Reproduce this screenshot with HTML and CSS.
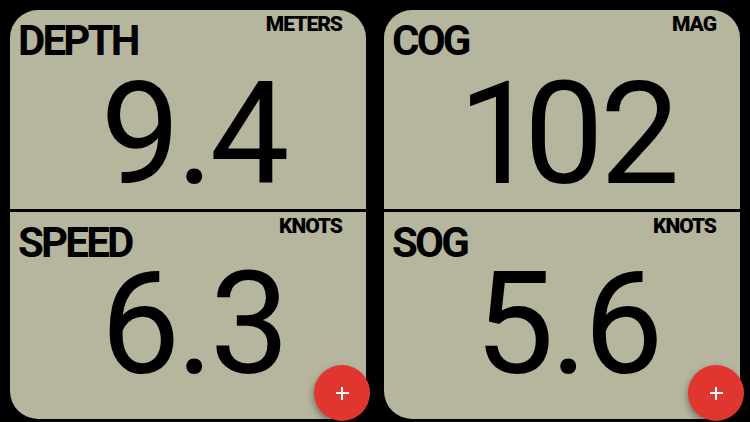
FILE: index.html
```html
<!DOCTYPE html>
<html lang="en">
<head>
<meta charset="utf-8">
<title>Instruments</title>
<link rel="stylesheet" href="styles.css">
</head>
<body>
<div class="screen">
  <div class="panel">
    <div class="section section-top">
      <div class="header">
        <span class="label">DEPTH</span>
        <span class="unit">METERS</span>
      </div>
      <div class="value">9.4</div>
    </div>
    <div class="divider"></div>
    <div class="section section-bottom">
      <div class="header">
        <span class="label">SPEED</span>
        <span class="unit">KNOTS</span>
      </div>
      <div class="value">6.3</div>
    </div>
    <button class="fab" aria-label="Add"><span class="plus"></span></button>
  </div>
  <div class="panel">
    <div class="section section-top">
      <div class="header">
        <span class="label">COG</span>
        <span class="unit">MAG</span>
      </div>
      <div class="value"><span class="one">1</span>02</div>
    </div>
    <div class="divider"></div>
    <div class="section section-bottom">
      <div class="header">
        <span class="label">SOG</span>
        <span class="unit">KNOTS</span>
      </div>
      <div class="value">5.6</div>
    </div>
    <button class="fab" aria-label="Add"><span class="plus"></span></button>
  </div>
</div>
</body>
</html>
```
FILE: styles.css
```css
html, body {
  margin: 0;
  padding: 0;
  background: #000;
}
body {
  width: 750px;
  height: 422px;
  overflow: hidden;
  font-family: Roboto, "Liberation Sans", sans-serif;
  color: #000;
}
.screen {
  display: flex;
  gap: 18px;
  padding: 10px 10px 3px 10px;
  height: 422px;
  box-sizing: border-box;
}
.panel {
  position: relative;
  flex: 1;
  display: flex;
  flex-direction: column;
  background: #b5b69d;
  border-radius: 28px;
}
.section {
  display: flex;
  flex-direction: column;
  padding: 0 24px 0 8px;
}
.section-top {
  height: 199px;
}
.section-bottom {
  flex: 1;
}
.divider {
  height: 3px;
  background: #000;
}
.header {
  display: flex;
  justify-content: space-between;
  align-items: flex-start;
}
.label {
  font-weight: 700;
  font-size: 42px;
  line-height: 0.75;
  letter-spacing: -2.8px;
  margin-top: 15px;
}
.unit {
  font-weight: 900;
  font-size: 21px;
  line-height: 0.75;
  letter-spacing: -1px;
  margin-top: 7px;
}
.value {
  font-weight: 400;
  font-size: 142px;
  line-height: 0.75;
  text-align: center;
  letter-spacing: -4px;
  margin: 0 -24px 0 -8px;
  padding-left: 10px;
}
.one {
  letter-spacing: -14px;
}
.section-top .value {
  margin-top: 25px;
}
.section-bottom .value {
  margin-top: 13px;
}
.fab {
  position: absolute;
  right: -4px;
  bottom: -2px;
  width: 56px;
  height: 56px;
  border: none;
  border-radius: 50%;
  background: #e0362f;
  box-shadow: -1px 3px 6px rgba(0, 0, 0, 0.35);
  padding: 0;
  display: flex;
  align-items: center;
  justify-content: center;
}
.plus {
  position: relative;
  width: 13px;
  height: 13px;
}
.plus::before,
.plus::after {
  content: "";
  position: absolute;
  background: #fff;
}
.plus::before {
  left: 0;
  right: 0;
  top: 5.5px;
  height: 2px;
}
.plus::after {
  top: 0;
  bottom: 0;
  left: 5.5px;
  width: 2px;
}
```
